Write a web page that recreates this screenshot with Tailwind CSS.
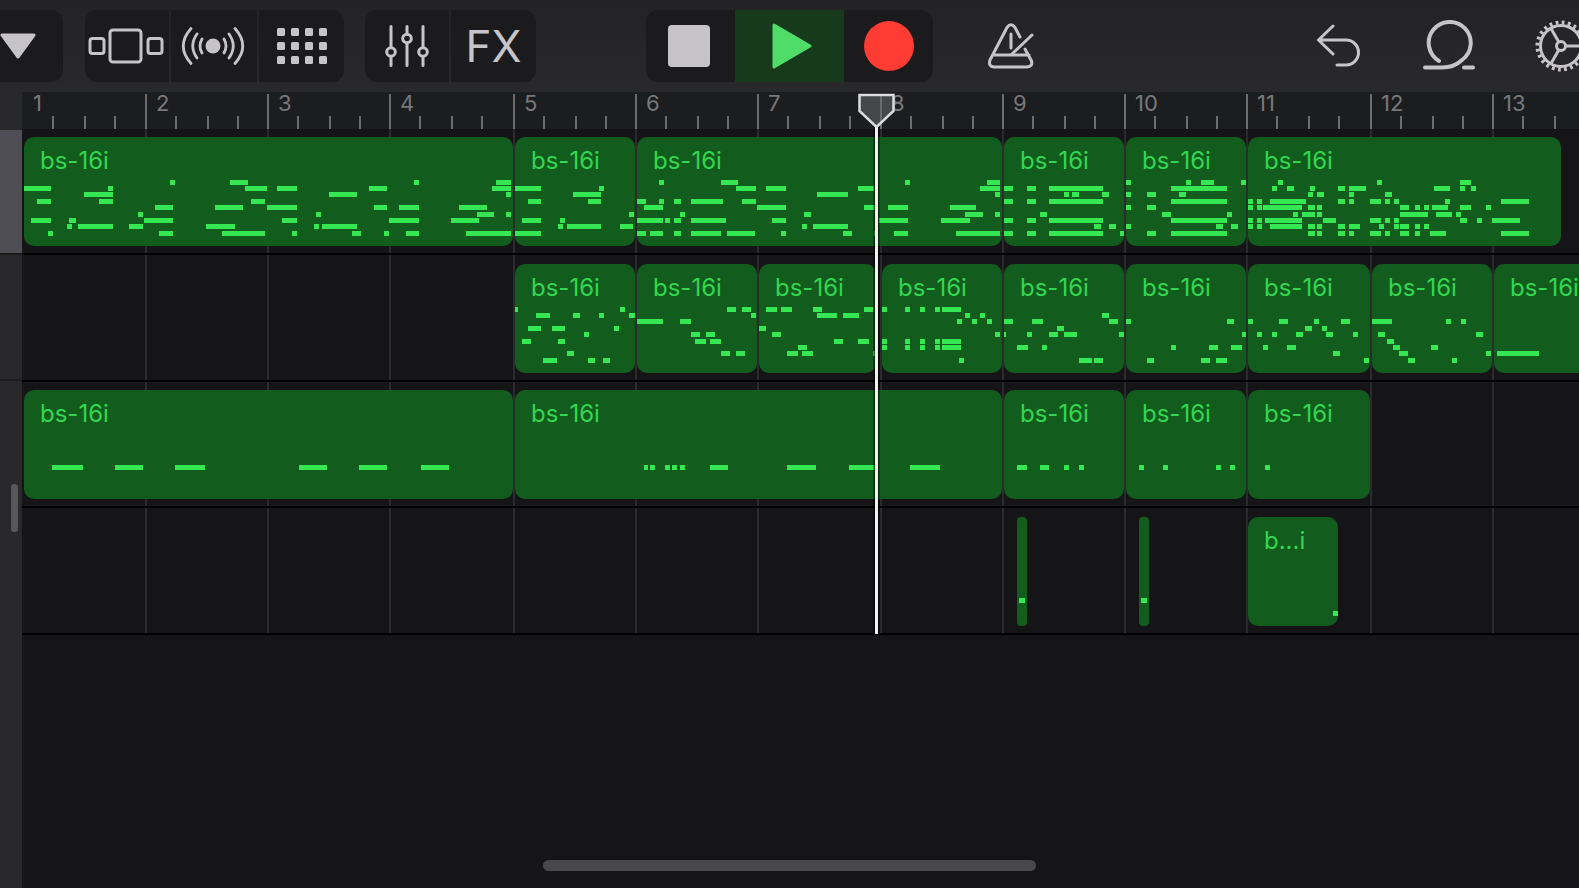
<!DOCTYPE html>
<html lang="en">
<head>
<meta charset="utf-8">
<title>Tracks</title>
<script src="https://cdn.jsdelivr.net/npm/@tailwindcss/browser@4"></script>
</head>
<body class="flex h-screen flex-col overflow-hidden bg-[#151517] font-['Inter',sans-serif] text-[#c6c4c8]">

<header class="flex h-[92px] shrink-0 items-center overflow-hidden bg-linear-to-b from-[#232325] to-[#29292c]">
  <button aria-label="Menu" class="flex h-[72px] w-[63px] shrink-0 items-center rounded-r-xl bg-[#1b1b1d]">
    <svg width="38" height="30" viewBox="0 0 38 30" fill="currentColor" stroke="currentColor" stroke-width="3" stroke-linejoin="round"><path d="M2 4H34L18 26Z"/></svg>
  </button>

  <div class="ml-[22px] flex h-[72px] shrink-0 gap-[2px] overflow-hidden rounded-xl">
    <button aria-label="Track view" class="flex w-[84px] items-center justify-center bg-[#1b1b1d] pr-[2px]">
      <svg width="76" height="40" viewBox="0 0 76 40" fill="none" stroke="currentColor" stroke-width="3"><rect x="22" y="4" width="31" height="32" rx="3"/><rect x="2" y="12.500" width="14" height="15" rx="2.500"/><rect x="60" y="12.500" width="14" height="15" rx="2.500"/></svg>
    </button>
    <button aria-label="Live" class="flex w-[86px] items-center justify-center bg-[#1b1b1d] pr-[2px]">
      <svg width="66" height="40" viewBox="0 0 66 40" fill="none" stroke="currentColor" stroke-width="2.800" stroke-linecap="round"><circle cx="33" cy="20" r="7.500" fill="currentColor" stroke="none"/><path d="M22 13Q18 20 22 27M17 8Q8.500 20 17 32M11 2.500Q-4.500 20 11 37.500M44 13Q48 20 44 27M49 8Q57.500 20 49 32M55 2.500Q70.500 20 55 37.500"/></svg>
    </button>
    <button aria-label="Pads" class="flex w-[85px] items-center justify-center bg-[#1b1b1d]">
      <svg width="50" height="38" viewBox="0 0 50 38" fill="currentColor"><g id="padrow"><rect x="0" y="1" width="8" height="8" rx="1.500"/><rect x="14" y="1" width="8" height="8" rx="1.500"/><rect x="28" y="1" width="8" height="8" rx="1.500"/><rect x="42" y="1" width="8" height="8" rx="1.500"/></g><use href="#padrow" y="14"/><use href="#padrow" y="28"/></svg>
    </button>
  </div>

  <div class="ml-[21px] flex h-[72px] shrink-0 gap-[2px] overflow-hidden rounded-xl">
    <button aria-label="Mixer" class="flex w-[84px] items-center justify-center bg-[#1b1b1d]">
      <svg width="44" height="44" viewBox="0 0 44 44" fill="none" stroke="currentColor" stroke-width="3" stroke-linecap="round"><path d="M6 2.500V23.500M6 32.500V41.500M22 2.500V10M22 19V41.500M38 2.500V23.500M38 32.500V41.500"/><circle cx="6" cy="28" r="4.300"/><circle cx="22" cy="14.500" r="4.300"/><circle cx="38" cy="28" r="4.300"/></svg>
    </button>
    <button class="flex w-[85px] items-center justify-center bg-[#1b1b1d] text-[44px] leading-none font-normal">FX</button>
  </div>

  <div class="ml-[110px] flex h-[72px] shrink-0 overflow-hidden rounded-xl bg-[#1b1b1d]">
    <button aria-label="Stop" class="flex w-[89px] items-center justify-center pr-1"><span class="size-[42px] rounded-[4px] bg-[#c6c4c8]"></span></button>
    <button aria-label="Play" class="flex w-[109px] items-center justify-center bg-[#173a1c]">
      <svg width="44" height="50" viewBox="0 0 44 50" fill="#4fdc69" stroke="#4fdc69" stroke-width="3" stroke-linejoin="round"><path d="M6 4V46L42 25Z"/></svg>
    </button>
    <button aria-label="Record" class="flex w-[89px] items-center justify-center"><span class="size-[50px] rounded-full bg-[#ff3c33]"></span></button>
  </div>

  <button aria-label="Metronome" class="ml-[54px] shrink-0">
    <svg width="48" height="48" viewBox="0 0 48 48" fill="none" stroke="currentColor" stroke-width="3" stroke-linecap="round" stroke-linejoin="round"><path d="M33 15L28 5.500Q24 0 20 5.500L3 38Q1 44.500 7 45H40Q46 44.500 44.500 39L38 27M6 33H42M24 12V26"/><path d="M25 32L45 13"/></svg>
  </button>

  <button aria-label="Undo" class="ml-auto shrink-0">
    <svg width="48" height="48" viewBox="0 0 48 48" fill="none" stroke="currentColor" stroke-width="3" stroke-linecap="round" stroke-linejoin="round"><path d="M16 4L1.500 18L16 32M2 18H29A12.500 12.500 0 0 1 29 43H20"/></svg>
  </button>
  <button aria-label="Loop" class="ml-[57px] shrink-0">
    <svg width="54" height="52" viewBox="0 0 54 52" fill="none" stroke="currentColor" stroke-width="4" stroke-linecap="round"><path d="M17 41A21 21 0 1 1 40 40Q32 47.500 20 47.500H3"/><path d="M42 47.500H51"/></svg>
  </button>
  <button aria-label="Settings" class="-mr-2 ml-[59px] shrink-0">
    <svg width="52" height="52" viewBox="0 0 52 52" fill="none" stroke="currentColor"><circle cx="26" cy="26" r="20.500" stroke-width="3"/><circle cx="26" cy="26" r="23.500" stroke-width="4" stroke-dasharray="2.800 3.353"/><circle cx="26" cy="26" r="4.500" stroke-width="3"/><path stroke-width="3" d="M31 26H46M23.500 21.500L16 8.500M23.500 30.500L16 43.500"/></svg>
  </button>
</header>

<main class="flex min-h-0 flex-1">
  <aside class="flex w-[22px] shrink-0 flex-col bg-[#29292c] pt-[38px]">
    <div class="h-[123px] bg-[#4f4e54]"></div>
    <div class="h-[128px] border-y-2 border-[#1c1c1e]"></div>
    <div class="mt-[103px] ml-[11px] h-[48px] w-[7px] rounded-full bg-[#58585c]"></div>
  </aside>

  <section class="relative min-w-0 flex-1 overflow-x-clip">
    <div id="ruler" class="flex h-[37px] bg-[#1c1d1f]"></div>
    <div id="tracks" class="relative"></div>
    <svg class="absolute top-0 left-[836px]" width="37" height="544" viewBox="0 0 37 544">
      <path d="M18.500 34V542" stroke="#000" stroke-opacity=".55" stroke-width="6"/>
      <path d="M1.500 3H35.500V19L18.500 35L1.500 19Z" fill="#6a6a6e" fill-opacity=".55" stroke="#dcdcde" stroke-width="2.500"/>
      <path d="M18.500 35V542" stroke="#f2f2f2" stroke-width="3"/>
    </svg>
  </section>
</main>

<div class="pointer-events-none absolute inset-x-0 bottom-[17px] flex justify-center"><div class="h-[11px] w-[493px] rounded-full bg-[#48484b]"></div></div>

<script>
// Width of each bar in pixels
const BARS = [123,122,122,124,122,122,123,122,122,122,124,122,122];
// Vertical offset of each pitch lane in a region's note area
const LANES = [3,9,15,22,28,35,41,47,54];

document.getElementById('ruler').innerHTML = BARS.map((w, i) => `
  <div class="grid shrink-0 grid-cols-[30px_32px_30px_1fr] grid-rows-[24px_13px]" style="width:${w}px">
    <div class="col-start-1 row-span-2 row-start-1 mt-[2px] ${i ? 'border-l-2 border-[#6c6d70]' : ''}"></div>
    <span class="col-span-4 col-start-1 row-start-1 pl-[11px] text-[22px] leading-[22px] text-[#77787b]">${i + 1}</span>
    <div class="col-start-2 row-start-2 border-l-2 border-[#6c6d70]"></div>
    <div class="col-start-3 row-start-2 border-l-2 border-[#6c6d70]"></div>
    <div class="col-start-4 row-start-2 border-l-2 border-[#6c6d70]"></div>
  </div>`).join('');

// Each region: timeline x, grid placement, label, notes as "lane: x,width ..." joined by |
const A = '1004,9 1027,9 1049,54', H = '882,5 905,5 920,5 935,5 942,19';
const TRACKS = [
  { h: 'h-[126px]', regions: [
    [24, 'col-start-1 col-end-5', 'bs-16i', '0:170,5 230,18 414,5 496,15|1:24,27 108,5 245,22 277,20 369,18 492,19|2:84,29 329,28 506,5|3:37,14 99,14 251,14|4:155,18 215,28 267,30 374,13 399,20 459,28|5:138,5 316,5 477,17 506,5|6:31,20 69,7 144,29 282,15 389,30 451,28|7:67,5 78,35 129,14 206,29 314,5 322,35|8:48,5 159,14 222,43 292,5 352,9 384,5 406,13 466,45'],
    [515, 'col-start-5 col-end-6', 'bs-16i', '1:515,26 599,5|2:573,28|3:528,13 588,13|5:629,5|6:522,19 560,5|7:558,5 567,34 620,13|8:515,26'],
    [637, 'col-start-6 col-end-9', 'bs-16i', '0:659,5 721,17 905,5 987,13|1:736,20 766,20 858,16 980,20|2:817,31 995,5|3:637,9 659,5 674,7 691,32 742,14|4:644,19 757,29 864,12 888,20 950,26|5:680,5 804,7 965,18 995,5|6:637,26 665,5 674,7 691,35 772,14 879,29 941,29|7:802,5 813,35|8:637,9 650,13 674,7 691,30 727,28 781,5 843,9 874,2 894,14 956,44'],
    [1004, 'col-start-9 col-end-10', 'bs-16i', `1:${A}|2:1064,5 1072,7 1102,7|3:${A}|5:1040,7|6:${A}|7:1094,7 1109,7|8:${A} 1120,4`],
    [1126, 'col-start-10 col-end-11', 'bs-16i', '0:1126,5 1186,5 1201,13 1241,5|1:1171,56|2:1126,5 1147,9 1179,7|3:1171,56|4:1126,5 1147,9|5:1162,9 1227,5|6:1171,56|7:1126,5 1216,7 1231,7|8:1147,9 1171,56'],
    [1248, 'col-start-11 col-end-14 w-[313px]', 'bs-16i', '0:1278,5 1377,5 1460,11|1:1272,5 1287,7 1310,5 1338,7 1349,17 1434,16 1460,5 1471,5|2:1308,5 1317,7 1349,5 1385,7|3:1248,5 1257,5 1270,36 1338,7 1349,5 1370,11 1385,5 1394,5 1445,5 1501,28|4:1248,5 1257,5 1263,39 1308,7 1317,5 1400,9 1415,5 1424,5 1432,16 1460,11 1486,5|5:1293,5 1302,13 1317,5 1400,28 1436,16 1456,5|6:1248,5 1257,5 1265,37 1323,13 1370,11 1385,5 1394,5 1460,7 1477,5 1492,28|7:1248,5 1257,5 1270,32 1308,7 1317,5 1338,7 1349,11 1379,5 1394,5 1400,9 1415,5 1424,5|8:1308,7 1317,5 1338,7 1349,5 1370,11 1385,5 1400,9 1415,5 1430,16 1501,28'] ] },
  { h: 'h-[127px]', regions: [
    [515, 'col-start-5 col-end-6', 'bs-16i', '0:515,3 620,5|1:536,14 573,7 599,5 629,7|3:528,13 552,13 614,5|4:584,5|5:522,9 558,7|7:567,7|8:543,14 588,7 603,7'],
    [637, 'col-start-6 col-end-7', 'bs-16i', '0:727,9 742,9|1:751,5|2:637,26 680,11|4:691,9 706,9|5:695,11 710,11|7:721,9 736,9'],
    [759, 'col-start-7 col-end-8 mr-[4px]', 'bs-16i', '0:766,11 781,11 813,9 864,9|1:817,20 843,16|3:759,7|4:772,9|5:834,9 858,11|6:798,9|7:787,11 802,11 873,4'],
    [882, 'col-start-8 col-end-9', 'bs-16i', `0:${H}|1:965,5 980,5|2:957,5 972,5 987,5|4:995,5|5:${H}|6:${H}|8:959,5`],
    [1004, 'col-start-9 col-end-10', 'bs-16i', '1:1102,7|2:1004,9 1032,11 1109,9|3:1057,7|4:1004,2 1027,5 1049,9 1064,13 1119,5|6:1017,11 1042,5|8:1079,13 1094,9'],
    [1126, 'col-start-10 col-end-11', 'bs-16i', '2:1126,5 1227,7|4:1242,5|6:1171,5 1209,9 1231,11|8:1147,7 1201,9 1216,11'],
    [1248, 'col-start-11 col-end-12', 'bs-16i', '2:1248,5 1279,9 1314,5 1341,9|3:1305,7 1322,5|4:1257,5 1272,5 1296,7 1326,7 1353,5|6:1263,5 1287,9|7:1333,7|8:1364,5'],
    [1372, 'col-start-12 col-end-13', 'bs-16i', '2:1372,20 1446,5 1461,5|4:1378,7 1476,7|5:1387,7|6:1393,7 1431,7|7:1399,9 1486,5|8:1408,7 1452,5'],
    [1494, 'col-start-13 col-end-14', 'bs-16i', '7:1497,42'] ] },
  { h: 'h-[126px]', regions: [
    [24, 'col-start-1 col-end-5', 'bs-16i', '5:52,31 115,28 175,30 299,28 359,28 421,28'],
    [515, 'col-start-5 col-end-9', 'bs-16i', '5:644,4 650,5 665,5 672,5 680,5 710,18 787,29 849,27 910,30'],
    [1004, 'col-start-9 col-end-10', 'bs-16i', '5:1017,10 1040,9 1064,5 1079,5'],
    [1126, 'col-start-10 col-end-11', 'bs-16i', '5:1139,5 1163,5 1216,5 1230,5'],
    [1248, 'col-start-11 col-end-12', 'bs-16i', '5:1265,5'] ] },
  { h: 'h-[127px]', regions: [
    [1017, 'col-start-9 col-end-10 ml-[15px] w-[10px]', '', '6:1019,6'],
    [1139, 'col-start-10 col-end-11 ml-[15px] w-[10px]', '', '6:1141,6'],
    [1248, 'col-start-11 col-end-12 w-[90px]', 'b...i', '8:1333,5'] ] },
];

const notes = (x0, s) => s.split('|').map(l => {
  const [lane, list] = l.split(':');
  return list.split(' ').map(n => { const [x, w] = n.split(','); return `<rect x="${x - x0}" y="${LANES[lane]}" width="${w}" height="5"/>`; }).join('');
}).join('');

document.getElementById('tracks').innerHTML =
  `<div class="absolute inset-0 flex">${BARS.map((w, i) => `<div class="shrink-0 ${i ? 'border-l-2 border-[#2b2b2e]' : ''}" style="width:${w}px"></div>`).join('')}</div>` +
  TRACKS.map(t => `<div class="${t.h} relative grid grid-cols-[123px_122px_122px_124px_122px_122px_123px_122px_122px_122px_124px_122px_122px] grid-rows-1 items-end border-b-2 border-black pb-[7px]">${
    t.regions.map(([x, cls, label, n]) => `<div class="row-start-1 ${cls} ${label ? 'ml-[2px] rounded-[10px]' : 'rounded-[4px]'} flex h-[109px] flex-col overflow-hidden bg-[#125c1d]"><div class="h-10 shrink-0 pt-2 pl-4 text-[24px] leading-8 whitespace-nowrap text-[#33d651]">${label}</div><svg class="w-full flex-1" fill="#35e853">${notes(x, n)}</svg></div>`).join('')
  }</div>`).join('');
</script>
</body>
</html>
